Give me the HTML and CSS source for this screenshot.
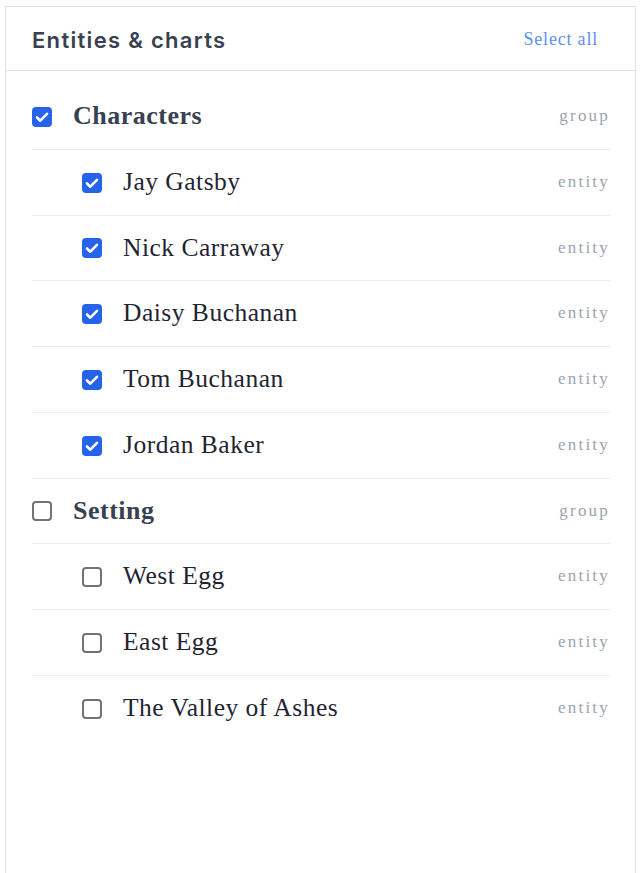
FILE: index.html
```html
<!DOCTYPE html>
<html lang="en">
<head>
<meta charset="utf-8">
<title>Entities &amp; charts</title>
<link rel="stylesheet" href="styles.css">
</head>
<body>
<section class="panel">
  <header class="panel-head">
    <h2 class="title">Entities &amp; charts</h2>
    <button class="select-all" type="button">Select all</button>
  </header>
  <ul class="list">
    <li class="row group">
      <span class="box checked"><svg viewBox="0 0 20 20"><path d="M5 10.5l3.3 3.2L15 6.8" /></svg></span>
      <span class="name">Characters</span>
      <span class="kind">group</span>
    </li>
    <li class="row child">
      <span class="box checked"><svg viewBox="0 0 20 20"><path d="M5 10.5l3.3 3.2L15 6.8" /></svg></span>
      <span class="name">Jay Gatsby</span>
      <span class="kind">entity</span>
    </li>
    <li class="row child">
      <span class="box checked"><svg viewBox="0 0 20 20"><path d="M5 10.5l3.3 3.2L15 6.8" /></svg></span>
      <span class="name">Nick Carraway</span>
      <span class="kind">entity</span>
    </li>
    <li class="row child">
      <span class="box checked"><svg viewBox="0 0 20 20"><path d="M5 10.5l3.3 3.2L15 6.8" /></svg></span>
      <span class="name">Daisy Buchanan</span>
      <span class="kind">entity</span>
    </li>
    <li class="row child">
      <span class="box checked"><svg viewBox="0 0 20 20"><path d="M5 10.5l3.3 3.2L15 6.8" /></svg></span>
      <span class="name">Tom Buchanan</span>
      <span class="kind">entity</span>
    </li>
    <li class="row child">
      <span class="box checked"><svg viewBox="0 0 20 20"><path d="M5 10.5l3.3 3.2L15 6.8" /></svg></span>
      <span class="name">Jordan Baker</span>
      <span class="kind">entity</span>
    </li>
    <li class="row group">
      <span class="box"></span>
      <span class="name">Setting</span>
      <span class="kind">group</span>
    </li>
    <li class="row child">
      <span class="box"></span>
      <span class="name">West Egg</span>
      <span class="kind">entity</span>
    </li>
    <li class="row child">
      <span class="box"></span>
      <span class="name">East Egg</span>
      <span class="kind">entity</span>
    </li>
    <li class="row child">
      <span class="box"></span>
      <span class="name">The Valley of Ashes</span>
      <span class="kind">entity</span>
    </li>
  </ul>
</section>
</body>
</html>
```
FILE: styles.css
```css
html, body {
  margin: 0;
  padding: 0;
  background: #ffffff;
  overflow: hidden;
}

.panel {
  margin: 6px 4px 0 5px;
  border: 1px solid #e2e2e2;
  border-bottom: none;
  height: 880px;
  background: #fff;
}

.panel-head {
  height: 63px;
  display: flex;
  align-items: center;
  justify-content: space-between;
  padding: 0 37px 0 26px;
  border-bottom: 1px solid #e2e2e2;
}

.title {
  margin: 0;
  font-family: Inter, "Noto Sans", sans-serif;
  font-size: 22px;
  font-weight: 600;
  color: #374151;
  letter-spacing: 1.3px;
  margin-top: 2px;
}

.select-all {
  border: none;
  background: none;
  padding: 0;
  margin-top: 1px;
  font-family: "Liberation Serif", serif;
  font-size: 18px;
  letter-spacing: 0.8px;
  color: #5e90ef;
  cursor: pointer;
}

.list {
  list-style: none;
  margin: 0;
  padding: 13px 25px 0 26px;
}

.row {
  display: flex;
  align-items: center;
  gap: 21px;
  padding: 16px 0;
  line-height: 32.75px;
  border-bottom: 1px solid #ececec;
}

.row:last-child {
  border-bottom: none;
}

.row.child {
  padding-left: 50px;
}

.box {
  flex: none;
  width: 20px;
  height: 20px;
  box-sizing: border-box;
  border: 2px solid #737373;
  border-radius: 4px;
  background: #fff;
  display: flex;
  margin-top: 1px;
}

.box.checked {
  background: #2563eb;
  border-color: #2563eb;
}

.box svg {
  width: 20px;
  height: 20px;
  margin: -2px;
}

.box svg path {
  fill: none;
  stroke: #ffffff;
  stroke-width: 2.6;
  stroke-linecap: round;
  stroke-linejoin: round;
}

.name {
  flex: 1;
  font-family: "Liberation Serif", serif;
  color: #1f2433;
  letter-spacing: 0.5px;
}

.group .name {
  font-size: 26px;
  font-weight: 700;
  color: #374151;
}

.child .name {
  font-size: 25.5px;
}

.kind {
  font-family: "Liberation Serif", serif;
  font-size: 17px;
  letter-spacing: 2.2px;
  color: #9ca3af;
}
```
